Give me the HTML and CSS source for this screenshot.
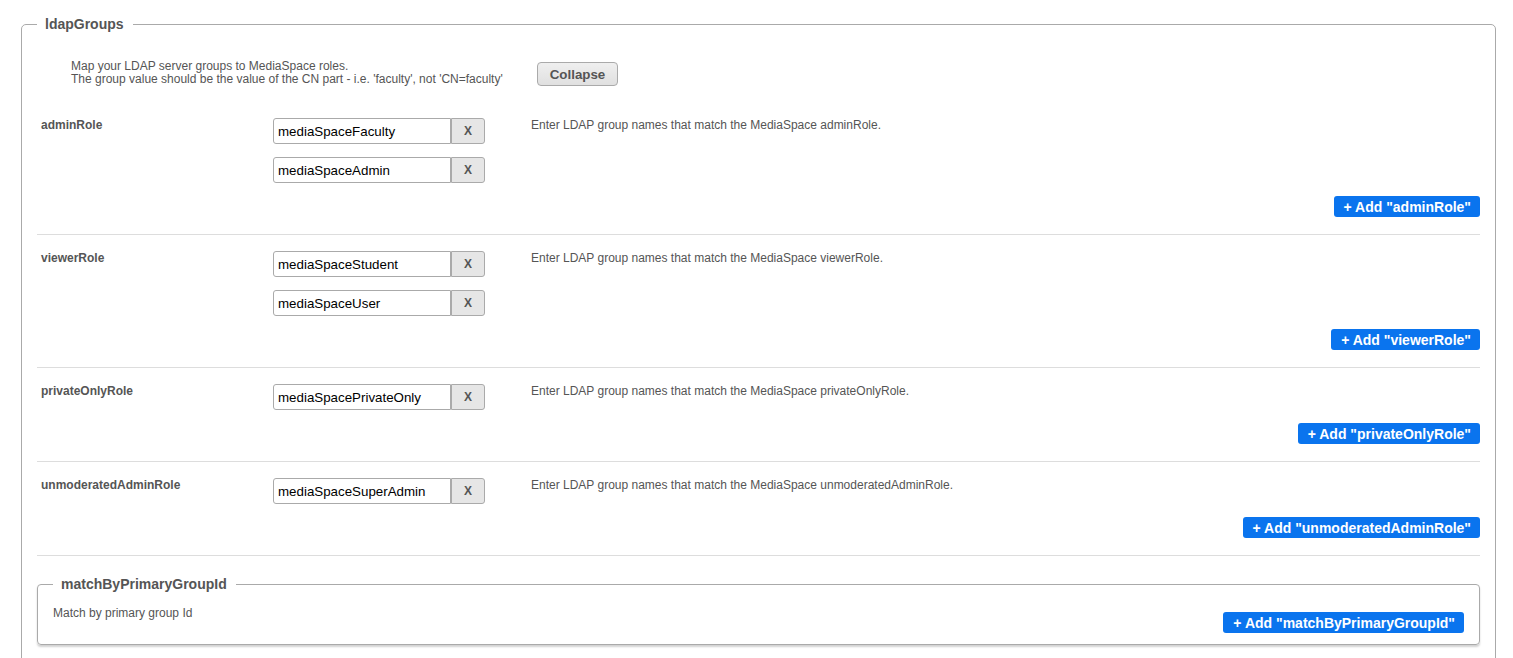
FILE: index.html
```html
<!DOCTYPE html>
<html>
<head>
<meta charset="utf-8">
<link rel="stylesheet" href="styles.css">
</head>
<body>
<div class="page">
  <fieldset class="group">
    <legend class="group-legend">ldapGroups</legend>
    <div class="intro">
      <p class="intro-text">Map your LDAP server groups to MediaSpace roles.<br>The group value should be the value of the CN part - i.e. 'faculty', not 'CN=faculty'</p>
      <button class="collapse-btn" type="button">Collapse</button>
    </div>

    <div class="role-row">
      <div class="role-grid">
        <div class="role-label">adminRole</div>
        <div class="role-inputs">
          <div class="entry"><input class="entry-input" type="text" value="mediaSpaceFaculty"><button class="entry-remove" type="button">X</button></div>
          <div class="entry"><input class="entry-input" type="text" value="mediaSpaceAdmin"><button class="entry-remove" type="button">X</button></div>
        </div>
        <div class="role-help">Enter LDAP group names that match the MediaSpace adminRole.</div>
      </div>
      <div class="role-actions"><button class="add-btn" type="button">+ Add "adminRole"</button></div>
    </div>

    <div class="role-row">
      <div class="role-grid">
        <div class="role-label">viewerRole</div>
        <div class="role-inputs">
          <div class="entry"><input class="entry-input" type="text" value="mediaSpaceStudent"><button class="entry-remove" type="button">X</button></div>
          <div class="entry"><input class="entry-input" type="text" value="mediaSpaceUser"><button class="entry-remove" type="button">X</button></div>
        </div>
        <div class="role-help">Enter LDAP group names that match the MediaSpace viewerRole.</div>
      </div>
      <div class="role-actions"><button class="add-btn" type="button">+ Add "viewerRole"</button></div>
    </div>

    <div class="role-row">
      <div class="role-grid">
        <div class="role-label">privateOnlyRole</div>
        <div class="role-inputs">
          <div class="entry"><input class="entry-input" type="text" value="mediaSpacePrivateOnly"><button class="entry-remove" type="button">X</button></div>
        </div>
        <div class="role-help">Enter LDAP group names that match the MediaSpace privateOnlyRole.</div>
      </div>
      <div class="role-actions"><button class="add-btn" type="button">+ Add "privateOnlyRole"</button></div>
    </div>

    <div class="role-row">
      <div class="role-grid">
        <div class="role-label">unmoderatedAdminRole</div>
        <div class="role-inputs">
          <div class="entry"><input class="entry-input" type="text" value="mediaSpaceSuperAdmin"><button class="entry-remove" type="button">X</button></div>
        </div>
        <div class="role-help">Enter LDAP group names that match the MediaSpace unmoderatedAdminRole.</div>
      </div>
      <div class="role-actions"><button class="add-btn" type="button">+ Add "unmoderatedAdminRole"</button></div>
    </div>

    <fieldset class="subgroup">
      <legend class="subgroup-legend">matchByPrimaryGroupId</legend>
      <div class="subgroup-body">
        <div class="subgroup-text">Match by primary group Id</div>
        <button class="add-btn add-btn-sub" type="button">+ Add "matchByPrimaryGroupId"</button>
      </div>
    </fieldset>
  </fieldset>
</div>
</body>
</html>
```

FILE: styles.css
```css
html, body {
  margin: 0;
  padding: 0;
  background: #fff;
  overflow: hidden;
}

body {
  font-family: "Liberation Sans", Arial, sans-serif;
  color: #555;
}

.page {
  padding: 16px 17px 0 21px;
}

.group {
  margin: 0;
  padding: 0 15px 40px 15px;
  min-width: 0;
  border: 1px solid #aaa;
  border-radius: 5px;
}

.group-legend {
  padding: 0 9px 0 8px;
  font-size: 14px;
  line-height: 16px;
  font-weight: bold;
  color: #555;
}

.intro {
  display: flex;
  align-items: flex-start;
  margin: 28px 0 16px 34px;
}

.intro-text {
  margin: 0;
  font-size: 12px;
  line-height: 13px;
  color: #555;
}

.collapse-btn {
  margin: 2px 0 0 34px;
  height: 24px;
  padding: 0 12px;
  font-family: "Liberation Sans", Arial, sans-serif;
  font-size: 13.333px;
  font-weight: bold;
  color: #555;
  background: linear-gradient(#efefef, #e0e0e0);
  border: 1px solid #aaa;
  border-radius: 4px;
}

.role-row {
  padding: 16px 0 17px;
  border-bottom: 1px solid #ddd;
}

.role-grid {
  display: grid;
  grid-template-columns: 236px 212px 1fr;
  align-items: start;
}

.role-label {
  padding-left: 4px;
  font-size: 12px;
  line-height: 15px;
  font-weight: bold;
  color: #555;
}

.role-inputs {
  display: flex;
  flex-direction: column;
  gap: 13px;
}

.entry {
  display: flex;
  height: 26px;
}

.entry-input {
  box-sizing: border-box;
  width: 178px;
  height: 26px;
  margin: 0;
  padding: 0 4px;
  font-family: "Liberation Sans", Arial, sans-serif;
  font-size: 13.333px;
  color: #000;
  border: 1px solid #aaa;
  border-radius: 3px 0 0 3px;
  outline: none;
}

.entry-remove {
  box-sizing: border-box;
  width: 34px;
  height: 26px;
  margin: 0;
  padding: 0;
  font-family: "Liberation Sans", Arial, sans-serif;
  font-size: 12px;
  font-weight: bold;
  color: #555;
  background: #e6e6e6;
  border: 1px solid #aaa;
  border-radius: 0 3px 3px 0;
}

.role-help {
  padding-left: 46px;
  font-size: 12px;
  line-height: 15px;
  color: #555;
}

.role-actions {
  display: flex;
  justify-content: flex-end;
  margin-top: 13px;
}

.add-btn {
  height: 21px;
  padding: 0 9px 0 10px;
  font-family: "Liberation Sans", Arial, sans-serif;
  font-size: 14px;
  font-weight: bold;
  color: #fff;
  background: #0a74ee;
  border: none;
  border-radius: 3px;
}

.subgroup {
  margin: 20px 0 0;
  padding: 14px 15px 11px 15px;
  min-width: 0;
  border: 1px solid #aaa;
  border-radius: 4px;
  box-shadow: 0 2px 2px rgba(0, 0, 0, 0.18);
}

.subgroup-legend {
  padding: 0 9px 0 8px;
  font-size: 14px;
  line-height: 16px;
  font-weight: bold;
  color: #555;
}

.subgroup-body {
  display: flex;
  justify-content: space-between;
  align-items: flex-start;
}

.subgroup-text {
  font-size: 12px;
  line-height: 14px;
  color: #555;
}

.add-btn-sub {
  margin-top: 6px;
}
```
